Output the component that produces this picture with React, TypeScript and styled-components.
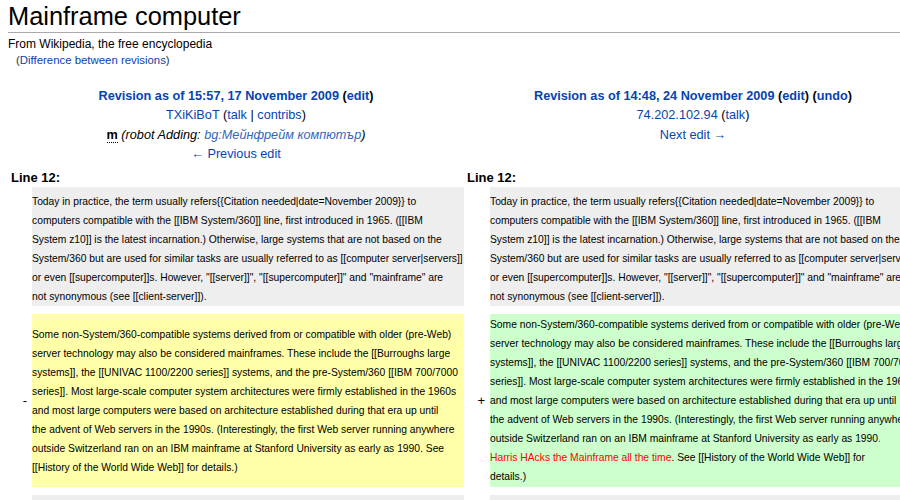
import React from "react"
import styled, { createGlobalStyle } from "styled-components"

const GlobalStyle = createGlobalStyle`
  html, body {
    margin: 0;
    padding: 0;
    background: #fff;
    overflow: hidden;
  }
  body {
    font-family: "Liberation Sans", Arial, sans-serif;
    color: #000;
  }
`

// the diff text, broken where the reference wraps it
const contextLines = [
  "Today in practice, the term usually refers{{Citation needed|date=November 2009}} to",
  "computers compatible with the [[IBM System/360]] line, first introduced in 1965. ([[IBM",
  "System z10]] is the latest incarnation.) Otherwise, large systems that are not based on the",
  "System/360 but are used for similar tasks are usually referred to as [[computer server|servers]]",
  "or even [[supercomputer]]s. However, \"[[server]]\", \"[[supercomputer]]\" and \"mainframe\" are",
  "not synonymous (see [[client-server]]).",
]

const sharedLines = [
  "Some non-System/360-compatible systems derived from or compatible with older (pre-Web)",
  "server technology may also be considered mainframes. These include the [[Burroughs large",
  "systems]], the [[UNIVAC 1100/2200 series]] systems, and the pre-System/360 [[IBM 700/7000",
  "series]]. Most large-scale computer system architectures were firmly established in the 1960s",
  "and most large computers were based on architecture established during that era up until",
  "the advent of Web servers in the 1990s. (Interestingly, the first Web server running anywhere",
]

const deletedLines = [
  ...sharedLines,
  "outside Switzerland ran on an IBM mainframe at Stanford University as early as 1990. See",
  "[[History of the World Wide Web]] for details.)",
]

export default function App() {
  return (
    <>
      <GlobalStyle />
      <S.Page>
        <S.Title>Mainframe computer</S.Title>
        <S.SiteSub>From Wikipedia, the free encyclopedia</S.SiteSub>
        <S.DiffNote>
          (<S.Link>Difference between revisions</S.Link>)
        </S.DiffNote>

        <S.DiffTable>
          <S.DiffRow $top={20}>
            <S.RevHeader>
              <S.RevTitle>
                <S.Link>Revision as of 15:57, 17 November 2009</S.Link> (<S.Link>edit</S.Link>)
              </S.RevTitle>
              <div>
                <S.Link>TXiKiBoT</S.Link> (<S.Link>talk</S.Link> | <S.Link>contribs</S.Link>)
              </div>
              <div>
                <S.Minor title="This is a minor edit">m</S.Minor>{" "}
                <S.Summary>
                  (robot Adding: <S.Interwiki>bg:Мейнфрейм компютър</S.Interwiki>)
                </S.Summary>
              </div>
              <div>
                <S.Link>← Previous edit</S.Link>
              </div>
            </S.RevHeader>
            <S.RevHeader>
              <S.RevTitle>
                <S.Link>Revision as of 14:48, 24 November 2009</S.Link> (<S.Link>edit</S.Link>) (<S.Link>undo</S.Link>)
              </S.RevTitle>
              <div>
                <S.Link>74.202.102.94</S.Link> (<S.Link>talk</S.Link>)
              </div>
              <div>
                <S.Link>Next edit →</S.Link>
              </div>
            </S.RevHeader>
          </S.DiffRow>

          <S.DiffRow $top={5}>
            <S.LineNo>Line 12:</S.LineNo>
            <S.LineNo>Line 12:</S.LineNo>
          </S.DiffRow>

          <S.DiffRow $top={0}>
            <S.Marker />
            <S.Cell $kind="context">
              {contextLines.map((l) => (
                <S.TextLine key={l}>{l}</S.TextLine>
              ))}
            </S.Cell>
            <S.Marker />
            <S.Cell $kind="context">
              {contextLines.map((l) => (
                <S.TextLine key={l}>{l}</S.TextLine>
              ))}
            </S.Cell>
          </S.DiffRow>

          <S.DiffRow $top={8}>
            <S.Marker>-</S.Marker>
            <S.Cell $kind="deleted">
              {deletedLines.map((l) => (
                <S.TextLine key={l}>{l}</S.TextLine>
              ))}
            </S.Cell>
            <S.Marker>+</S.Marker>
            <S.Cell $kind="added">
              {sharedLines.map((l) => (
                <S.TextLine key={l}>{l}</S.TextLine>
              ))}
              <S.TextLine>
                outside Switzerland ran on an IBM mainframe at Stanford University as early as 1990
                <S.Change>.</S.Change>
              </S.TextLine>
              <S.TextLine>
                <S.Change>Harris HAcks the Mainframe all the time</S.Change>. See [[History of the World Wide Web]] for
              </S.TextLine>
              <S.TextLine>details.)</S.TextLine>
            </S.Cell>
          </S.DiffRow>

          <S.DiffRow $top={8}>
            <S.Marker />
            <S.Cell $kind="context">
              <S.TextLine>&nbsp;</S.TextLine>
            </S.Cell>
            <S.Marker />
            <S.Cell $kind="context">
              <S.TextLine>&nbsp;</S.TextLine>
            </S.Cell>
          </S.DiffRow>
        </S.DiffTable>
      </S.Page>
    </>
  )
}

const cellColors = {
  context: "#eeeeee",
  deleted: "#ffffaa",
  added: "#ccffcc",
}

const S = {
  Page: styled.div`
    padding-left: 8px;
    width: 892px;
  `,
  Title: styled.h1`
    margin: 0;
    padding-top: 1px;
    font-size: 25.4px;
    font-weight: normal;
    line-height: 31px;
    border-bottom: 1px solid #aaaaaa;
  `,
  SiteSub: styled.div`
    margin-top: 3px;
    font-size: 12px;
    line-height: 16px;
  `,
  DiffNote: styled.div`
    margin-top: 1px;
    padding-left: 8px;
    font-size: 11.4px;
    line-height: 14px;
    color: #333;
  `,
  Link: styled.a`
    color: #0645ad;
    text-decoration: none;
    cursor: pointer;
  `,
  Interwiki: styled.a`
    color: #3366bb;
    text-decoration: none;
  `,
  DiffTable: styled.div`
    display: flex;
    flex-direction: column;
    width: 914px;
  `,
  DiffRow: styled.div<{ $top: number }>`
    display: grid;
    grid-template-columns: 24px 432px 26px 432px;
    margin-top: ${(p) => p.$top}px;
  `,
  RevHeader: styled.div`
    grid-column: span 2;
    text-align: center;
    font-size: 12.7px;
    line-height: 19.3px;
  `,
  RevTitle: styled.div`
    font-weight: bold;
  `,
  Minor: styled.abbr`
    font-weight: bold;
    text-decoration: none;
    border-bottom: 1px dotted #000;
    cursor: help;
  `,
  Summary: styled.span`
    font-style: italic;
  `,
  LineNo: styled.div`
    grid-column: span 2;
    padding-left: 3px;
    font-size: 13px;
    font-weight: bold;
    line-height: 18px;
  `,
  Marker: styled.div`
    display: flex;
    align-items: center;
    justify-content: flex-end;
    padding-right: 5px;
    font-size: 13px;
  `,
  Cell: styled.div<{ $kind: "context" | "deleted" | "added" }>`
    display: flex;
    flex-direction: column;
    justify-content: center;
    overflow: hidden;
    padding: ${(p) => (p.$kind === "context" ? "5px 0 0" : "1px 0")};
    background: ${(p) => cellColors[p.$kind]};
    font-size: 10.3px;
    line-height: 19px;
  `,
  TextLine: styled.div`
    white-space: nowrap;
  `,
  Change: styled.span`
    color: #ff0000;
  `,
}
